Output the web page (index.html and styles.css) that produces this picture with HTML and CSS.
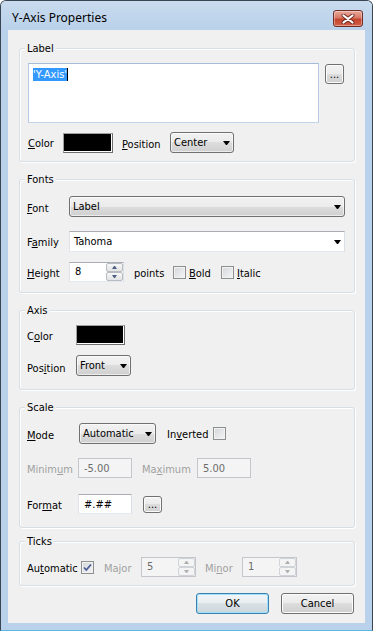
FILE: index.html
```html
<!DOCTYPE html>
<html lang="en">
<head>
    <meta charset="UTF-8">
    <meta name="viewport" content="width=device-width, initial-scale=1.0">
    <title>Y-Axis Properties</title>
    <link rel="stylesheet" href="styles.css">
</head>
<body>
    <div class="window">
        <div class="titlebar">
            <span class="title">Y-Axis Properties</span>
            <button class="close-btn" type="button" aria-label="Close">
                <svg width="14" height="10" viewBox="0 0 14 10">
                    <path d="M2.5 1.5 L11.5 8.5 M11.5 1.5 L2.5 8.5" stroke="#6e2a20" stroke-width="4" stroke-linecap="round"/>
                    <path d="M2.5 1.5 L11.5 8.5 M11.5 1.5 L2.5 8.5" stroke="#fff" stroke-width="2.2" stroke-linecap="round"/>
                </svg>
            </button>
        </div>

        <div class="dialog">
            <!-- Label -->
            <div class="group group-label">
                <span class="group-title">Label</span>
                <div class="row row-top">
                    <div class="textbox label-text"><span class="sel">'Y-Axis'</span><span class="caret"></span></div>
                    <button class="btn btn-dots label-dots" type="button">...</button>
                </div>
                <div class="row mt9">
                    <span class="lbl w35"><u>C</u>olor</span>
                    <span class="swatch w50"></span>
                    <span class="lbl low ml9 w48"><u>P</u>osition</span>
                    <div class="combo w64"><span>Center</span><span class="arrow"></span></div>
                </div>
            </div>

            <!-- Fonts -->
            <div class="group group-fonts">
                <span class="group-title">Fonts</span>
                <div class="row">
                    <span class="lbl low w42"><u>F</u>ont</span>
                    <div class="combo combo-wide h20"><span>Label</span><span class="arrow"></span></div>
                </div>
                <div class="row mt14">
                    <span class="lbl w42">F<u>a</u>mily</span>
                    <div class="combo-edit combo-wide"><span>Tahoma</span><span class="arrow"></span></div>
                </div>
                <div class="row mt10">
                    <span class="lbl w42"><u>H</u>eight</span>
                    <div class="spin">
                        <span class="spin-val">8</span>
                        <span class="spin-btns"><span class="up"></span><span class="down"></span></span>
                    </div>
                    <span class="lbl ml10 w39">points</span>
                    <span class="check"></span>
                    <span class="lbl ml3 w32"><u>B</u>old</span>
                    <span class="check"></span>
                    <span class="lbl ml3"><u>I</u>talic</span>
                </div>
            </div>

            <!-- Axis -->
            <div class="group group-axis">
                <span class="group-title">Axis</span>
                <div class="row">
                    <span class="lbl w49">C<u>o</u>lor</span>
                    <span class="swatch w49"></span>
                </div>
                <div class="row mt10">
                    <span class="lbl lower w49">Pos<u>i</u>tion</span>
                    <div class="combo w55"><span>Front</span><span class="arrow"></span></div>
                </div>
            </div>

            <!-- Scale -->
            <div class="group group-scale">
                <span class="group-title">Scale</span>
                <div class="row">
                    <span class="lbl low w52"><u>M</u>ode</span>
                    <div class="combo w77"><span>Automatic</span><span class="arrow"></span></div>
                    <span class="lbl ml11 w46">In<u>v</u>erted</span>
                    <span class="check"></span>
                </div>
                <div class="row mt14">
                    <span class="lbl disabled w51">Minim<u>u</u>m</span>
                    <div class="textbox field disabled-field">-5.00</div>
                    <span class="lbl disabled ml10 w55">Ma<u>x</u>imum</span>
                    <div class="textbox field disabled-field">5.00</div>
                </div>
                <div class="row mt16">
                    <span class="lbl w51">For<u>m</u>at</span>
                    <div class="textbox field h19">#.##</div>
                    <button class="btn btn-dots format-dots" type="button">...</button>
                </div>
            </div>

            <!-- Ticks -->
            <div class="group group-ticks">
                <span class="group-title">Ticks</span>
                <div class="row">
                    <span class="lbl w54">Au<u>t</u>omatic</span>
                    <span class="check">
                        <svg width="11" height="11" viewBox="0 0 11 11"><path d="M2 5.5 L4.3 8 L9 2.5" fill="none" stroke="#4a5f97" stroke-width="1.8"/></svg>
                    </span>
                    <span class="lbl disabled ml10 w37">Major</span>
                    <div class="spin spin-off w54">
                        <span class="spin-val">5</span>
                        <span class="spin-btns"><span class="up"></span><span class="down"></span></span>
                    </div>
                    <span class="lbl disabled ml9 w37">Mi<u>n</u>or</span>
                    <div class="spin spin-off w54">
                        <span class="spin-val">1</span>
                        <span class="spin-btns"><span class="up"></span><span class="down"></span></span>
                    </div>
                </div>
            </div>

            <div class="buttons">
                <button class="btn btn-push btn-default" type="button">OK</button>
                <button class="btn btn-push" type="button">Cancel</button>
            </div>
        </div>
    </div>
</body>
</html>
```

FILE: styles.css
```css
/* Dialogo estilo Windows 7 (tema basico) */
body {
    margin: 0;
    font-family: "DejaVu Sans Condensed", "Liberation Sans", sans-serif;
    font-size: 11px;
    color: #000;
    background: #fff;
}
.window {
    width: 373px;
    height: 631px;
    box-sizing: border-box;
    border: 1px solid #3b4654;
    border-bottom-color: #5bb6e0;
    border-radius: 6px 6px 0 0;
    background: #b9d1ea;
    overflow: hidden;
}

/* barra de titulo */
.titlebar {
    height: 29px;
    display: flex;
    justify-content: space-between;
    align-items: flex-start;
    padding: 0 9px 0 11px;
    background: linear-gradient(#c9dbee, #b9d1ea);
}
.title {
    margin-top: 9px;
    font-family: "Noto Sans", "Open Sans", sans-serif;
    font-size: 12px;
    line-height: 16px;
    color: #000;
}
.close-btn {
    margin-top: 9px;
    width: 30px;
    height: 17px;
    padding: 0;
    border: 1px solid #6f2f27;
    border-radius: 3px;
    background: linear-gradient(#e9a89a, #d77a66 45%, #c4432a 55%, #d4614a);
    box-shadow: inset 0 0 0 1px rgba(255, 255, 255, 0.35);
    display: flex;
    align-items: center;
    justify-content: center;
}

/* cuerpo */
.dialog {
    margin: 0 7px;
    height: 593px;
    box-sizing: border-box;
    padding: 18px 10px 0 11px;
    background: #f0f0f0;
}
.group {
    position: relative;
    border: 1px solid #d5dfe5;
    border-radius: 3px;
    box-shadow: inset 1px 1px 0 #fff, 1px 1px 0 #fff;
}
.group + .group {
    margin-top: 17px;
}
.group + .group.group-ticks {
    margin-top: 13px;
}
.group-title {
    position: absolute;
    top: -7px;
    left: 5px;
    padding: 0 2px;
    line-height: 13px;
    background: #f0f0f0;
}
.group-label { padding: 14px 0 8px 8px; }
.group-fonts { padding: 16px 0 10px 7px; }
.group-axis  { padding: 14px 0 13px 7px; }
.group-scale { padding: 15px 0 13px 7px; }
.group-ticks { padding: 15px 0 8px 7px; }

.row {
    display: flex;
    align-items: center;
}
.row-top {
    align-items: flex-start;
}
.mt9  { margin-top: 9px; }
.mt10 { margin-top: 10px; }
.mt14 { margin-top: 14px; }
.mt16 { margin-top: 16px; }
.ml3  { margin-left: 3px; }
.ml9  { margin-left: 9px; }
.ml10 { margin-left: 10px; }
.ml11 { margin-left: 11px; }

.w32 { width: 32px; }
.w35 { width: 35px; }
.w37 { width: 37px; }
.w39 { width: 39px; }
.w42 { width: 42px; }
.w46 { width: 46px; }
.w48 { width: 48px; }
.w49 { width: 49px; }
.w50 { width: 50px; }
.w51 { width: 51px; }
.w52 { width: 52px; }
.w54 { width: 54px; }
.w55 { width: 55px; }
.w64 { width: 64px; }
.w77 { width: 77px; }
.h19 { height: 19px; }
.h20 { height: 20px; }

.lbl {
    flex-shrink: 0;
    padding-top: 2px;
    line-height: 13px;
    white-space: nowrap;
}
.lbl.low   { padding-top: 4px; }
.lbl.lower { padding-top: 6px; }
.disabled  { color: #a0a0a0; }

/* cajas de texto */
.textbox {
    box-sizing: border-box;
    border: 1px solid;
    border-color: #abadb3 #dbdfe6 #e3e9ef #e2e3ea;
    background: #fff;
}
.label-text {
    width: 291px;
    height: 60px;
    padding: 4px 0 0 4px;
    border-color: #a5bcd9 #b7cbe4 #c3d5ea #b7cbe4;
    line-height: 13px;
}
.sel {
    background: #3399ff;
    color: #fff;
}
.caret {
    display: inline-block;
    width: 1px;
    height: 13px;
    background: #000;
    vertical-align: top;
}
.field {
    width: 54px;
    height: 20px;
    padding-left: 5px;
    display: flex;
    align-items: center;
}
.disabled-field {
    background: #f4f4f4;
    border-color: #c3c6cb;
    color: #6d6d6d;
}

/* colores */
.swatch {
    height: 20px;
    box-sizing: border-box;
    background: #000;
    border: 1px solid;
    border-color: #a0a0a0 #6d6d6d #6d6d6d #a0a0a0;
    box-shadow: inset -1px -1px 0 #fff;
}

/* listas desplegables */
.combo {
    height: 21px;
    box-sizing: border-box;
    padding: 0 3px;
    display: flex;
    align-items: center;
    justify-content: space-between;
    border: 1px solid #707070;
    border-radius: 3px;
    background: linear-gradient(#f2f2f2, #ebebeb 50%, #dddddd 50%, #cfcfcf);
    box-shadow: inset 0 0 0 1px rgba(255, 255, 255, 0.6);
    line-height: 13px;
}
.combo-wide {
    width: 276px;
}
.combo-edit {
    height: 21px;
    box-sizing: border-box;
    padding: 0 3px 0 4px;
    display: flex;
    align-items: center;
    justify-content: space-between;
    border: 1px solid;
    border-color: #abadb3 #dbdfe6 #e3e9ef #e2e3ea;
    background: #fff;
    line-height: 13px;
}
.arrow {
    width: 1px;
    height: 0;
    border-top: 4px solid #000;
    border-left: 3px solid transparent;
    border-right: 3px solid transparent;
}

/* spinner */
.spin {
    width: 55px;
    height: 20px;
    box-sizing: border-box;
    display: flex;
    border: 1px solid;
    border-color: #abadb3 #dbdfe6 #e3e9ef #e2e3ea;
    background: #fff;
}
.spin-val {
    flex: 1;
    padding-left: 5px;
    line-height: 18px;
}
.spin-btns {
    width: 17px;
    display: flex;
    flex-direction: column;
}
.spin-btns span {
    flex: 1;
    display: flex;
    align-items: center;
    justify-content: center;
    border: 1px solid #b7bcc2;
    border-radius: 2px;
    background: linear-gradient(#f7f7f7, #e3e3e3);
}
.spin-btns .up::after,
.spin-btns .down::after {
    content: "";
    width: 1px;
    height: 0;
    border-left: 2px solid transparent;
    border-right: 2px solid transparent;
}
.spin-btns .up::after {
    border-bottom: 3px solid #4d6185;
}
.spin-btns .down::after {
    border-top: 3px solid #4d6185;
}
.spin-off {
    background: #f4f4f4;
    border-color: #c3c6cb;
    color: #6d6d6d;
}
.spin-off .spin-btns span {
    border-color: #d0d3d7;
    background: #f4f4f4;
}
.spin-off .spin-btns .up::after {
    border-bottom-color: #b0b0b0;
}
.spin-off .spin-btns .down::after {
    border-top-color: #b0b0b0;
}

/* casillas */
.check {
    width: 13px;
    height: 13px;
    flex-shrink: 0;
    box-sizing: border-box;
    display: flex;
    align-items: center;
    justify-content: center;
    border: 1px solid #8e8f8f;
    background: linear-gradient(135deg, #d3d5d8, #f6f6f6);
    box-shadow: inset 0 0 0 1px #f2f2f2;
}

/* botones */
.btn {
    height: 21px;
    box-sizing: border-box;
    padding: 0;
    font: inherit;
    color: #000;
    border: 1px solid #707070;
    border-radius: 3px;
    background: linear-gradient(#f2f2f2, #ebebeb 50%, #dddddd 50%, #cfcfcf);
    box-shadow: inset 0 0 0 1px #fcfcfc;
}
.btn-dots {
    width: 19px;
    height: 20px;
    line-height: 13px;
}
.label-dots {
    margin: 1px 0 0 6px;
}
.format-dots {
    height: 17px;
    margin-left: 11px;
}
.buttons {
    margin-top: 7px;
    padding-right: 1px;
    display: flex;
    justify-content: flex-end;
    gap: 12px;
}
.btn-push {
    width: 73px;
    height: 21px;
}
.btn-default {
    border-color: #3c7fb1;
    box-shadow: inset 0 0 0 1px #9ee3fb;
    background: linear-gradient(#f2f5f7, #e9eef1 50%, #d9e1e6 50%, #ccd6dc);
}
```
